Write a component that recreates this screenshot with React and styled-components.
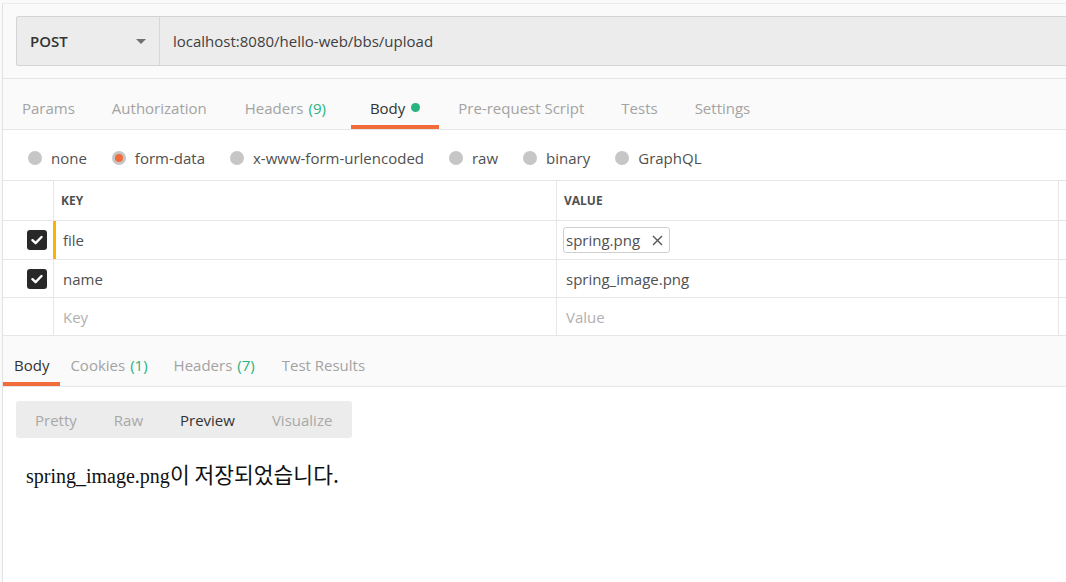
import React from "react";
import styled, { createGlobalStyle } from "styled-components";

const Global = createGlobalStyle`
  html, body {
    margin: 0;
    padding: 0;
    background: #fafafa;
  }
  body {
    font-family: "Open Sans", "Noto Sans", sans-serif;
    color: #505050;
  }
`;

const Page = styled.div`
  margin-left: 2px;
  margin-top: 3px;
  border-left: 1px solid #e2e2e2;
  border-top: 1px solid #ececec;
  min-height: calc(100vh - 4px);
  display: flex;
  flex-direction: column;
  background: #fafafa;
  overflow: hidden;
`;

const UrlArea = styled.div`
  padding: 12px 0 12px 13px;
  border-bottom: 1px solid #e6e6e6;
`;

const UrlBar = styled.div`
  display: flex;
  height: 48px;
  background: #ececec;
  border: 1px solid #d4d4d4;
  border-right: none;
  border-radius: 3px 0 0 3px;
`;

const Method = styled.div`
  width: 143px;
  display: flex;
  align-items: center;
  justify-content: space-between;
  padding: 0 13px;
  box-sizing: border-box;
  border-right: 1px solid #d8d8d8;
  font-size: 15px;
  font-weight: 600;
  color: #333;
`;

const Caret = styled.span`
  width: 0;
  height: 0;
  border-left: 5px solid transparent;
  border-right: 5px solid transparent;
  border-top: 5px solid #707070;
`;

const Url = styled.div`
  display: flex;
  align-items: center;
  padding-left: 13px;
  font-size: 15px;
  color: #404040;
`;

const Tabs = styled.div`
  display: flex;
  height: ${(p) => p.h}px;
  padding-left: ${(p) => p.pl}px;
  border-bottom: 1px solid #e6e6e6;
  background: #fafafa;
  box-sizing: border-box;
`;

const Tab = styled.div`
  position: relative;
  display: flex;
  align-items: center;
  padding: ${(p) => p.pt}px ${(p) => p.px || 0}px 0;
  margin-left: ${(p) => p.ml || 0}px;
  font-size: 15px;
  color: ${(p) => (p.active ? "#333" : "#a3a3a3")};
  white-space: nowrap;
  &::after {
    content: "";
    display: ${(p) => (p.active ? "block" : "none")};
    position: absolute;
    left: 0;
    right: 0;
    bottom: 0;
    height: 4px;
    background: #f26b3a;
  }
`;

const Count = styled.span`
  color: #26b47f;
  margin-left: 5px;
`;

const Dot = styled.span`
  width: 9px;
  height: 9px;
  border-radius: 50%;
  background: #26b47f;
  margin-left: 6px;
`;

const RadioRow = styled.div`
  display: flex;
  align-items: center;
  height: 51px;
  padding: 6px 0 0 25px;
  box-sizing: border-box;
  gap: 25px;
  background: #fff;
  border-bottom: 1px solid #e6e6e6;
`;

const RadioItem = styled.label`
  display: flex;
  align-items: center;
  gap: 9px;
  font-size: 15px;
  color: #505050;
`;

const RadioCircle = styled.span`
  width: 14px;
  height: 14px;
  border-radius: 50%;
  background: #c6c6c6;
  display: flex;
  align-items: center;
  justify-content: center;
  &::after {
    content: "";
    display: ${(p) => (p.on ? "block" : "none")};
    width: 8px;
    height: 8px;
    border-radius: 50%;
    background: #f26b3a;
  }
`;

const Table = styled.div`
  display: grid;
  grid-template-columns: 50px 503px 502px 20px;
  grid-template-rows: 40px 39px 38px 38px;
  background: #fff;
`;

const Cell = styled.div`
  position: relative;
  display: flex;
  align-items: center;
  box-sizing: border-box;
  padding-left: ${(p) => p.pl ?? 9}px;
  border-left: ${(p) => (p.first ? "none" : "1px solid #e6e6e6")};
  border-bottom: 1px solid #e6e6e6;
  font-size: 15px;
  color: ${(p) => (p.ph ? "#b0b0b0" : "#505050")};
`;

const HeadCell = styled(Cell)`
  padding-left: 7px;
  font-size: 12px;
  font-weight: 700;
  color: #505050;
`;

const Marker = styled.span`
  position: absolute;
  left: -1px;
  top: 0;
  bottom: 0;
  width: 3px;
  background: #f7b500;
`;

const Check = styled.span`
  width: 20px;
  height: 20px;
  border-radius: 3px;
  background: #282828;
  display: flex;
  align-items: center;
  justify-content: center;
`;

const Chip = styled.span`
  display: inline-flex;
  align-items: center;
  gap: 12px;
  height: 24px;
  padding: 0 6px 0 2px;
  margin-left: -3px;
  border: 1px solid #cfcfcf;
  border-radius: 3px;
  color: #505050;
`;

const Response = styled.div`
  flex: 1;
  background: #fff;
`;

const ViewBar = styled.div`
  margin: 14px 0 0 13px;
  width: 336px;
  height: 37px;
  display: flex;
  align-items: center;
  background: #ececec;
  border-radius: 3px;
`;

const ViewBtn = styled.span`
  font-size: 15px;
  color: ${(p) => (p.active ? "#333" : "#a8a8a8")};
  margin-left: ${(p) => p.ml}px;
`;

const Preview = styled.div`
  padding: 20px 0 0 23px;
  font-family: "Liberation Serif", "Times New Roman", "Noto Sans CJK KR", serif;
  font-size: 20px;
  color: #111;
`;

const Kor = styled.span`
  font-family: "Noto Sans CJK KR", sans-serif;
  font-size: 21.5px;
`;

const CheckIcon = () => (
  <svg width="12" height="10" viewBox="0 0 12 10">
    <path
      d="M1.5 5.2 L4.6 8.2 L10.5 2"
      fill="none"
      stroke="#fff"
      strokeWidth="2.4"
      strokeLinecap="round"
      strokeLinejoin="round"
    />
  </svg>
);

const XIcon = () => (
  <svg width="11" height="11" viewBox="0 0 11 11">
    <path d="M1 1 L10 10 M10 1 L1 10" stroke="#555" strokeWidth="1.4" />
  </svg>
);

const radios = [
  ["none", false],
  ["form-data", true],
  ["x-www-form-urlencoded", false],
  ["raw", false],
  ["binary", false],
  ["GraphQL", false],
];

const Row = ({ checked, keyText, marker, children }) => (
  <>
    <Cell first pl={24}>
      {checked && (
        <Check>
          <CheckIcon />
        </Check>
      )}
    </Cell>
    <Cell ph={!checked}>
      {marker && <Marker />}
      {keyText}
    </Cell>
    <Cell ph={!checked}>{children}</Cell>
    <Cell />
  </>
);

export default function App() {
  return (
    <>
      <Global />
      <Page>
        <UrlArea>
          <UrlBar>
            <Method>
              POST
              <Caret />
            </Method>
            <Url>localhost:8080/hello-web/bbs/upload</Url>
          </UrlBar>
        </UrlArea>

        <Tabs h={51} pl={19}>
          <Tab pt={7}>Params</Tab>
          <Tab pt={7} ml={37}>Authorization</Tab>
          <Tab pt={7} ml={38}>
            Headers <Count>(9)</Count>
          </Tab>
          <Tab pt={7} ml={25} px={19} active>
            Body <Dot />
          </Tab>
          <Tab pt={7} ml={19}>Pre-request Script</Tab>
          <Tab pt={7} ml={37}>Tests</Tab>
          <Tab pt={7} ml={37}>Settings</Tab>
        </Tabs>

        <RadioRow>
          {radios.map(([label, on]) => (
            <RadioItem key={label}>
              <RadioCircle on={on} />
              {label}
            </RadioItem>
          ))}
        </RadioRow>

        <Table>
          <HeadCell first />
          <HeadCell>KEY</HeadCell>
          <HeadCell>VALUE</HeadCell>
          <HeadCell />

          <Row checked keyText="file" marker>
            <Chip>
              spring.png
              <XIcon />
            </Chip>
          </Row>
          <Row checked keyText="name">
            spring_image.png
          </Row>
          <Row keyText="Key">Value</Row>
        </Table>

        <Tabs h={51} pl={0}>
          <Tab pt={7} px={11} active>
            Body
          </Tab>
          <Tab pt={7} ml={10}>
            Cookies <Count>(1)</Count>
          </Tab>
          <Tab pt={7} ml={26}>
            Headers <Count>(7)</Count>
          </Tab>
          <Tab pt={7} ml={27}>Test Results</Tab>
        </Tabs>

        <Response>
          <ViewBar>
            <ViewBtn ml={19}>Pretty</ViewBtn>
            <ViewBtn ml={37}>Raw</ViewBtn>
            <ViewBtn ml={37} active>
              Preview
            </ViewBtn>
            <ViewBtn ml={37}>Visualize</ViewBtn>
          </ViewBar>
          <Preview>
            spring_image.png<Kor>이 저장되었습니다.</Kor>
          </Preview>
        </Response>
      </Page>
    </>
  );
}
